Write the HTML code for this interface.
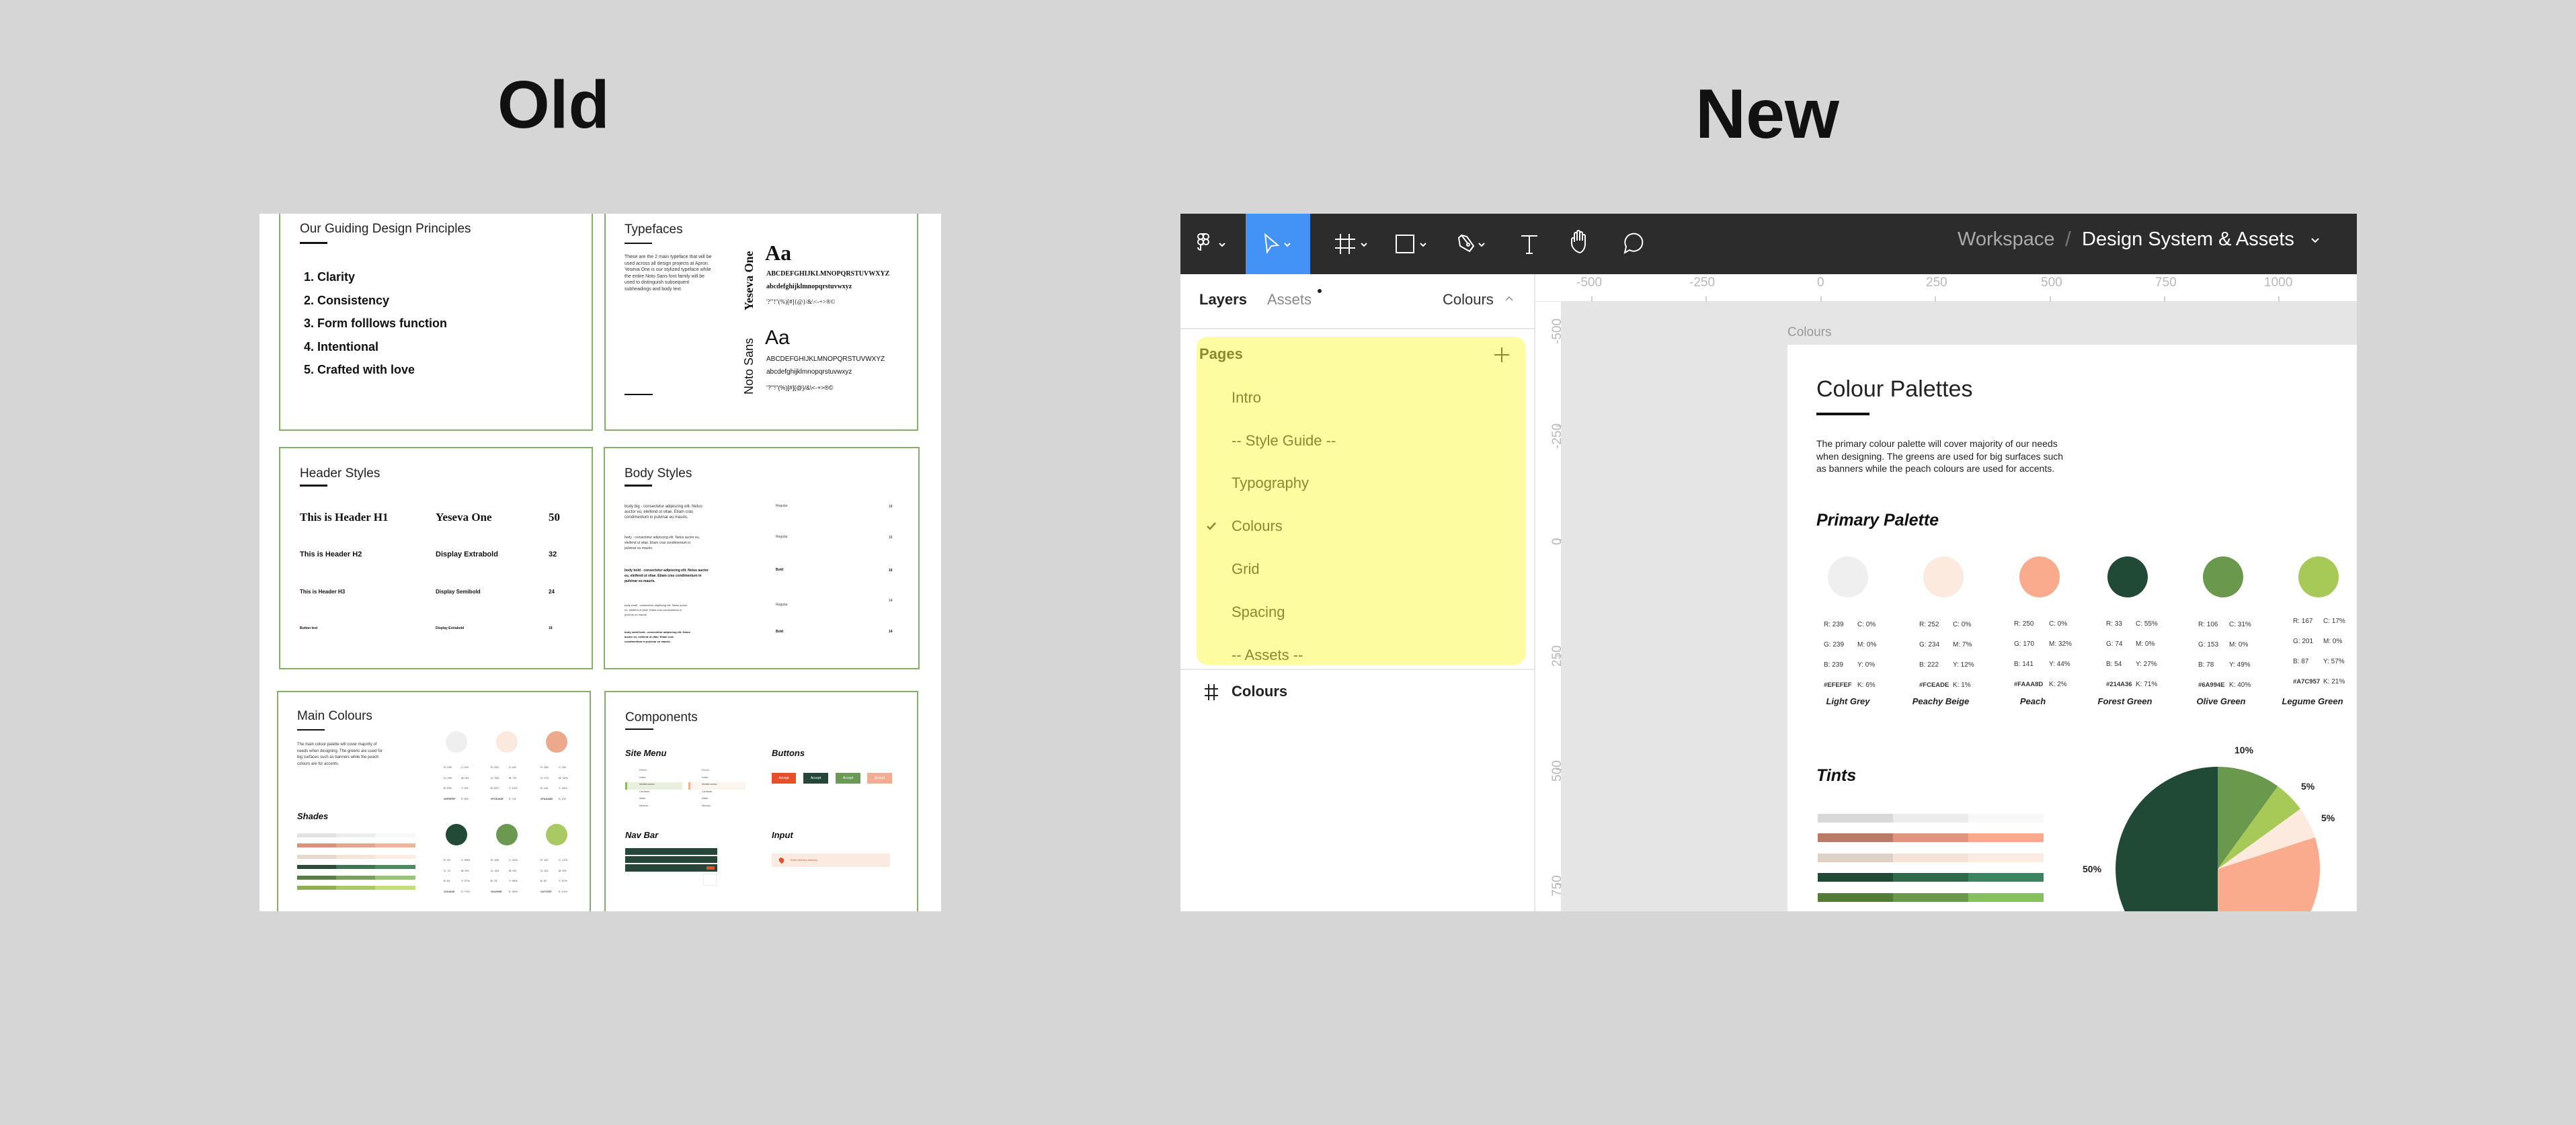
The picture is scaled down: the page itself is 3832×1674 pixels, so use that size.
<!DOCTYPE html>
<html><head><meta charset="utf-8">
<style>
*{margin:0;padding:0;box-sizing:border-box}
body{width:3832px;height:1674px;background:#d6d6d6;position:relative;overflow:hidden;font-family:"Liberation Sans",sans-serif;color:#111}
.a{position:absolute;white-space:nowrap}
.card{position:absolute;border:2px solid #86ad6a;background:#fff}
.ul{position:absolute;height:3px;background:#111}
.t{font-size:19px;font-weight:300;color:#222}
.li{font-size:18px;font-weight:bold}
.s8{font-size:7px;color:#333}
.tb{position:absolute;top:318px;height:90px}
.pg{position:absolute;left:1832px;font-size:22px;color:#8a8a30}
.rn{position:absolute;font-size:19px;color:#b8b8b8}
.v{position:absolute;font-size:10px;color:#333}
.v b{font-size:9.5px}
.nm{position:absolute;font-size:13px;font-style:italic;font-weight:bold;color:#222;transform:translateX(-50%)}
</style></head><body>

<div class="a" style="left:740px;top:96px;font-size:100px;font-weight:bold;line-height:120px">Old</div>
<div class="a" style="left:2522px;top:110px;font-size:104px;font-weight:bold;line-height:120px">New</div>

<!-- OLD PANEL -->
<div style="position:absolute;left:386px;top:318px;width:1014px;height:1038px;background:#fff;overflow:hidden">
</div>
<div style="position:absolute;left:386px;top:318px;width:1014px;height:1038px;overflow:hidden">
 <div class="card" style="left:29px;top:-10px;width:467px;height:333px"></div>
 <div class="card" style="left:513px;top:-10px;width:467px;height:333px"></div>
 <div class="card" style="left:29px;top:347px;width:467px;height:331px"></div>
 <div class="card" style="left:512px;top:347px;width:470px;height:331px"></div>
 <div class="card" style="left:26px;top:710px;width:467px;height:340px"></div>
 <div class="card" style="left:513px;top:710px;width:467px;height:340px"></div>
</div>
<!-- card1 -->
<div class="a t" style="left:446px;top:330px">Our Guiding Design Principles</div>
<div class="ul" style="left:446px;top:360px;width:41px"></div>
<div class="a li" style="left:452px;top:402px">1. Clarity</div>
<div class="a li" style="left:452px;top:437px">2. Consistency</div>
<div class="a li" style="left:452px;top:471px">3. Form folllows function</div>
<div class="a li" style="left:452px;top:506px">4. Intentional</div>
<div class="a li" style="left:452px;top:540px">5. Crafted with love</div>
<!-- card2 -->
<div class="a t" style="left:929px;top:331px">Typefaces</div>
<div class="ul" style="left:929px;top:361px;width:41px;height:2px"></div>
<div class="a s8" style="left:929px;top:378px;line-height:9.5px">These are the 2 main typeface that will be<br>used across all design projects at Apron.<br>Yeseva One is our stylized typeface while<br>the entire Noto Sans font family will be<br>used to distinguish subsequent<br>subheadings and body text.</div>
<div class="a" style="left:1104px;top:462px;transform:rotate(-90deg);transform-origin:0 0;font-family:'Liberation Serif',serif;font-weight:bold;font-size:18px;width:100px">Yeseva One</div>
<div class="a" style="left:1138px;top:358px;font-family:'Liberation Serif',serif;font-weight:bold;font-size:32px">Aa</div>
<div class="a" style="left:1140px;top:402px;font-family:'Liberation Serif',serif;font-weight:bold;font-size:10px">ABCDEFGHIJKLMNOPQRSTUVWXYZ</div>
<div class="a" style="left:1140px;top:421px;font-family:'Liberation Serif',serif;font-weight:bold;font-size:10px">abcdefghijklmnopqrstuvwxyz</div>
<div class="a" style="left:1140px;top:444px;font-family:'Liberation Serif',serif;font-size:9px">'?'"!"(%)[#]{@}/&amp;\&lt;-+&gt;®©</div>
<div class="a" style="left:1104px;top:587px;transform:rotate(-90deg);transform-origin:0 0;font-size:18px;width:84px">Noto Sans</div>
<div class="a" style="left:1138px;top:486px;font-size:30px">Aa</div>
<div class="a" style="left:1140px;top:529px;font-size:10px">ABCDEFGHIJKLMNOPQRSTUVWXYZ</div>
<div class="a" style="left:1140px;top:548px;font-size:10px">abcdefghijklmnopqrstuvwxyz</div>
<div class="a" style="left:1140px;top:572px;font-size:9px">'?'"!"(%)[#]{@}/&amp;\&lt;-+&gt;®©</div>
<div class="ul" style="left:929px;top:586px;width:42px;height:2px"></div>
<!-- card3 -->
<div class="a t" style="left:446px;top:694px">Header Styles</div>
<div class="ul" style="left:446px;top:721px;width:41px"></div>
<div class="a" style="left:446px;top:760px;font-family:'Liberation Serif',serif;font-weight:bold;font-size:17px">This is Header H1</div>
<div class="a" style="left:648px;top:760px;font-family:'Liberation Serif',serif;font-weight:bold;font-size:17px">Yeseva One</div>
<div class="a" style="left:816px;top:760px;font-family:'Liberation Serif',serif;font-weight:bold;font-size:17px">50</div>
<div class="a" style="left:446px;top:819px;font-weight:bold;font-size:11px">This is Header H2</div>
<div class="a" style="left:648px;top:819px;font-weight:bold;font-size:11px">Display Extrabold</div>
<div class="a" style="left:816px;top:819px;font-weight:bold;font-size:11px">32</div>
<div class="a" style="left:446px;top:876px;font-weight:bold;font-size:8px">This is Header H3</div>
<div class="a" style="left:648px;top:876px;font-weight:bold;font-size:8px">Display Semibold</div>
<div class="a" style="left:816px;top:876px;font-weight:bold;font-size:8px">24</div>
<div class="a" style="left:446px;top:932px;font-weight:bold;font-size:5px">Button text</div>
<div class="a" style="left:648px;top:932px;font-weight:bold;font-size:5px">Display Extrabold</div>
<div class="a" style="left:816px;top:932px;font-weight:bold;font-size:5px">18</div>
<!-- card4 -->
<div class="a t" style="left:929px;top:694px">Body Styles</div>
<div class="ul" style="left:929px;top:721px;width:41px"></div>
<div class="a" style="left:929px;top:750px;font-size:6px;line-height:8px;color:#333">body big - consectetur adipiscing elit. Netus<br>auctor eu, eleifend ut vitae. Etiam cras<br>condimentum in pulvinar eu mauris.</div>
<div class="a" style="left:929px;top:796px;font-size:5px;line-height:8px;color:#333">body - consectetur adipiscing elit. Netus auctor eu,<br>eleifend ut vitae. Etiam cras condimentum in<br>pulvinar eu mauris.</div>
<div class="a" style="left:929px;top:845px;font-size:5px;line-height:8px;font-weight:bold">body bold - consectetur adipiscing elit. Netus auctor<br>eu, eleifend ut vitae. Etiam cras condimentum in<br>pulvinar eu mauris.</div>
<div class="a" style="left:929px;top:897px;font-size:4px;line-height:7px;color:#333">body small - consectetur adipiscing elit. Netus auctor<br>eu, eleifend ut vitae. Etiam cras condimentum in<br>pulvinar eu mauris.</div>
<div class="a" style="left:929px;top:937px;font-size:4px;line-height:7px;font-weight:bold">body small bold - consectetur adipiscing elit. Netus<br>auctor eu, eleifend ut vitae. Etiam cras<br>condimentum in pulvinar eu mauris.</div>
<div class="a" style="left:1154px;top:750px;font-size:5px;color:#444">Regular</div>
<div class="a" style="left:1154px;top:796px;font-size:5px;color:#444">Regular</div>
<div class="a" style="left:1154px;top:845px;font-size:5px;font-weight:bold">Bold</div>
<div class="a" style="left:1154px;top:897px;font-size:5px;color:#444">Regular</div>
<div class="a" style="left:1154px;top:937px;font-size:5px;font-weight:bold">Bold</div>
<div class="a" style="left:1322px;top:751px;font-size:5px">18</div>
<div class="a" style="left:1322px;top:797px;font-size:5px">16</div>
<div class="a" style="left:1322px;top:846px;font-size:5px;font-weight:bold">16</div>
<div class="a" style="left:1322px;top:891px;font-size:5px">14</div>
<div class="a" style="left:1322px;top:937px;font-size:5px;font-weight:bold">14</div>
<!-- card5 -->
<div class="a t" style="left:442px;top:1055px">Main Colours</div>
<div class="ul" style="left:442px;top:1085px;width:41px;height:2px"></div>
<div class="a" style="left:442px;top:1104px;font-size:6px;line-height:9.5px;color:#333">The main colour palette will cover majority of<br>needs when designing. The greens are used for<br>big surfaces such as banners while the peach<br>colours are for accents.</div>
<div class="a" style="left:442px;top:1207px;font-size:13px;font-weight:bold;font-style:italic">Shades</div>
<div class="a" style="left:663px;top:1088px;width:32px;height:32px;border-radius:50%;background:#efefef"></div>
<div class="a" style="left:738px;top:1088px;width:32px;height:32px;border-radius:50%;background:#fbe9de"></div>
<div class="a" style="left:812px;top:1088px;width:32px;height:32px;border-radius:50%;background:#eda98b"></div>
<div class="a" style="left:663px;top:1226px;width:32px;height:32px;border-radius:50%;background:#234a37"></div>
<div class="a" style="left:738px;top:1226px;width:32px;height:32px;border-radius:50%;background:#6c9952"></div>
<div class="a" style="left:812px;top:1226px;width:32px;height:32px;border-radius:50%;background:#a9c963"></div>
<div class="a" style="left:660px;top:1134px;font-size:4px;line-height:15.6px;color:#444">R: 239<br>G: 239<br>B: 239<br><b>#EFEFEF</b></div>
<div class="a" style="left:686px;top:1134px;font-size:4px;line-height:15.6px;color:#444">C: 0%<br>M: 0%<br>Y: 0%<br>K: 6%</div>
<div class="a" style="left:730px;top:1134px;font-size:4px;line-height:15.6px;color:#444">R: 252<br>G: 234<br>B: 222<br><b>#FCEADE</b></div>
<div class="a" style="left:757px;top:1134px;font-size:4px;line-height:15.6px;color:#444">C: 0%<br>M: 7%<br>Y: 12%<br>K: 1%</div>
<div class="a" style="left:804px;top:1134px;font-size:4px;line-height:15.6px;color:#444">R: 250<br>G: 170<br>B: 141<br><b>#FAAA8D</b></div>
<div class="a" style="left:831px;top:1134px;font-size:4px;line-height:15.6px;color:#444">C: 0%<br>M: 32%<br>Y: 44%<br>K: 2%</div>
<div class="a" style="left:660px;top:1272px;font-size:4px;line-height:15.6px;color:#444">R: 33<br>G: 74<br>B: 54<br><b>#214A36</b></div>
<div class="a" style="left:686px;top:1272px;font-size:4px;line-height:15.6px;color:#444">C: 55%<br>M: 0%<br>Y: 27%<br>K: 71%</div>
<div class="a" style="left:730px;top:1272px;font-size:4px;line-height:15.6px;color:#444">R: 106<br>G: 153<br>B: 78<br><b>#6A994E</b></div>
<div class="a" style="left:757px;top:1272px;font-size:4px;line-height:15.6px;color:#444">C: 31%<br>M: 0%<br>Y: 49%<br>K: 40%</div>
<div class="a" style="left:804px;top:1272px;font-size:4px;line-height:15.6px;color:#444">R: 167<br>G: 201<br>B: 87<br><b>#A7C957</b></div>
<div class="a" style="left:831px;top:1272px;font-size:4px;line-height:15.6px;color:#444">C: 17%<br>M: 0%<br>Y: 57%<br>K: 21%</div>
<div class="a" style="left:442px;top:1240px;width:176px;height:6px;background:linear-gradient(90deg,#e2e2e2 33%,#ededed 33% 66%,#f7f7f7 66%)"></div>
<div class="a" style="left:442px;top:1255px;width:176px;height:6px;background:linear-gradient(90deg,#d9937a 33%,#e6a48c 33% 66%,#f0b49c 66%)"></div>
<div class="a" style="left:442px;top:1272px;width:176px;height:6px;background:linear-gradient(90deg,#e6d8cf 33%,#f3e3d9 33% 66%,#fbede4 66%)"></div>
<div class="a" style="left:442px;top:1287px;width:176px;height:6px;background:linear-gradient(90deg,#2b4a38 33%,#3e7453 33% 66%,#4f8a64 66%)"></div>
<div class="a" style="left:442px;top:1303px;width:176px;height:6px;background:linear-gradient(90deg,#5a7d45 33%,#76a05b 33% 66%,#98c676 66%)"></div>
<div class="a" style="left:442px;top:1318px;width:176px;height:6px;background:linear-gradient(90deg,#8fae52 33%,#aac863 33% 66%,#c5df78 66%)"></div>
<!-- card6 -->
<div class="a t" style="left:930px;top:1057px">Components</div>
<div class="ul" style="left:930px;top:1084px;width:42px;height:2px"></div>
<div class="a" style="left:930px;top:1113px;font-size:13px;font-weight:bold;font-style:italic">Site Menu</div>
<div class="a" style="left:1148px;top:1113px;font-size:13px;font-weight:bold;font-style:italic">Buttons</div>
<div class="a" style="left:930px;top:1235px;font-size:13px;font-weight:bold;font-style:italic">Nav Bar</div>
<div class="a" style="left:1148px;top:1235px;font-size:13px;font-weight:bold;font-style:italic">Input</div>
<div class="a" style="left:1148px;top:1150px;width:36px;height:16px;background:#e94e2a;color:#fff;font-size:5px;text-align:center;line-height:16px">Accept</div>
<div class="a" style="left:1195px;top:1150px;width:37px;height:16px;background:#24473a;color:#fff;font-size:5px;text-align:center;line-height:16px">Accept</div>
<div class="a" style="left:1243px;top:1150px;width:37px;height:16px;background:#6a9a54;color:#fff;font-size:5px;text-align:center;line-height:16px">Accept</div>
<div class="a" style="left:1290px;top:1150px;width:37px;height:16px;background:#f0ae94;color:#fff;font-size:5px;text-align:center;line-height:16px">Accept</div>
<div class="a" style="left:930px;top:1164px;width:85px;height:11px;background:#e9f0dd;border-left:3px solid #8dbb5a"></div>
<div class="a" style="left:1024px;top:1164px;width:85px;height:11px;background:#fbf5ef;border-left:3px solid #f0ae94"></div>
<div class="a" style="left:951px;top:1141px;font-size:3.5px;line-height:10.6px;color:#555">French<br>Indian<br>Mediterranean<br>Carribean<br>Italian<br>Mexican</div>
<div class="a" style="left:1044px;top:1141px;font-size:3.5px;line-height:10.6px;color:#555">French<br>Indian<br>Mediterranean<br>Carribean<br>Italian<br>Mexican</div>
<div class="a" style="left:930px;top:1262px;width:137px;height:10px;background:#24473a"></div>
<div class="a" style="left:930px;top:1274px;width:137px;height:10px;background:#24473a"></div>
<div class="a" style="left:930px;top:1286px;width:137px;height:11px;background:#24473a"></div>
<div class="a" style="left:1051px;top:1289px;width:12px;height:5px;background:#e94e2a"></div>
<div class="a" style="left:1046px;top:1300px;width:20px;height:18px;border:1px solid #eee"></div>
<div class="a" style="left:1148px;top:1270px;width:176px;height:20px;background:#fbeae0"></div>
<div class="a" style="left:1159px;top:1276px;width:7px;height:8px;border-radius:50% 50% 50% 0;background:#e94e2a;transform:rotate(-45deg)"></div>
<div class="a" style="left:1176px;top:1277px;font-size:4px;color:#e94e2a">Enter delivery address</div>

<!-- NEW PANEL -->
<div style="position:absolute;left:1756px;top:318px;width:1750px;height:1038px;background:#fff;overflow:hidden"></div>
<div class="tb" style="left:1756px;width:1750px;background:#2c2c2c"></div>
<div class="tb" style="left:1853px;width:96px;background:#4293f5"></div>
<svg style="position:absolute;left:1756px;top:318px" width="1750" height="90" fill="none" stroke="#fff" stroke-width="2">
 <g transform="translate(24,29)">
  <rect x="2" y="1" width="8" height="8" rx="4"/><rect x="10" y="1" width="8" height="8" rx="4"/><rect x="2" y="9" width="8" height="8" rx="4"/><circle cx="14" cy="13" r="4"/><path d="M6 17v8a4 4 0 0 1-4-4"/>
  <path d="M6 1h8M6 17h4"/>
 </g>
 <path d="M58 44l4 4 4-4"/>
 <path d="M126 31l3 26 6-9 10-1z"/><path d="M155 44l4 4 4-4"/>
 <path d="M238 30v30M251 30v30M230 38h30M230 51h30"/><path d="M269 44l4 4 4-4"/>
 <rect x="321" y="32" width="26" height="26"/><path d="M357 44l4 4 4-4"/>
 <path d="M418 32l8 2 10 14-6 8-14-8-2-12z"/><path d="M418 32l10 13"/><circle cx="428" cy="46" r="2"/><path d="M430 56l6-8"/><path d="M444 44l4 4 4-4"/>
 <path d="M507 33h24M519 33v26M514 59h10"/>
 <path d="M594 58c-7-2-12-8-12-14v-6a2 2 0 0 1 4 0v4v-12a2 2 0 0 1 4 0v10v-13a2 2 0 0 1 4 0v13v-11a2 2 0 0 1 4 0v11v-7a2 2 0 0 1 4 0v12c0 7-4 12-8 13z"/>
 <path d="M668 54a13 13 0 1 0-5-5l-2 9z"/>
</svg>
<div class="a" style="left:2912px;top:340px;font-size:29px;color:#aaa">Workspace</div>
<div class="a" style="left:3072px;top:338px;font-size:31px;color:#777">/</div>
<div class="a" style="left:3097px;top:340px;font-size:29px;color:#fff">Design System &amp; Assets</div>
<svg style="position:absolute;left:3436px;top:352px" width="16" height="12" fill="none" stroke="#fff" stroke-width="2"><path d="M3 3l5 5 5-5"/></svg>

<!-- sidebar -->
<div class="a" style="left:2282px;top:408px;width:2px;height:948px;background:#e6e6e6"></div>
<div class="a" style="left:1784px;top:433px;font-size:22px;font-weight:bold;color:#222">Layers</div>
<div class="a" style="left:1885px;top:433px;font-size:22px;color:#888">Assets</div>
<div class="a" style="left:1960px;top:430px;width:6px;height:6px;border-radius:50%;background:#222"></div>
<div class="a" style="left:2146px;top:433px;font-size:22px;color:#333">Colours</div>
<svg style="position:absolute;left:2238px;top:440px" width="14" height="10" fill="none" stroke="#888" stroke-width="1.5"><path d="M2 7l5-5 5 5"/></svg>
<div class="a" style="left:1756px;top:488px;width:527px;height:2px;background:#e6e6e6"></div>
<div class="a" style="left:1780px;top:501px;width:489px;height:488px;background:#fdfca0;border-radius:16px"></div>
<div class="a" style="left:1784px;top:514px;font-size:22px;font-weight:bold;color:#8a8a30">Pages</div>
<svg style="position:absolute;left:2222px;top:516px" width="24" height="24" stroke="#8a8a30" stroke-width="2"><path d="M12 1v22M1 12h22"/></svg>
<div class="pg" style="top:579px">Intro</div>
<div class="pg" style="top:643px">-- Style Guide --</div>
<div class="pg" style="top:706px">Typography</div>
<div class="pg" style="top:770px">Colours</div>
<svg style="position:absolute;left:1794px;top:776px" width="16" height="14" fill="none" stroke="#8a8a30" stroke-width="2.5"><path d="M2 7l4 4 8-9"/></svg>
<div class="pg" style="top:834px">Grid</div>
<div class="pg" style="top:898px">Spacing</div>
<div class="pg" style="top:962px;height:24px;overflow:hidden">-- Assets --</div>
<div class="a" style="left:1756px;top:995px;width:527px;height:2px;background:#e6e6e6"></div>
<svg style="position:absolute;left:1790px;top:1016px" width="24" height="28" stroke="#222" stroke-width="2"><path d="M8 2v24M16 2v24M2 9h20M2 19h20"/></svg>
<div class="a" style="left:1832px;top:1016px;font-size:22px;font-weight:bold;color:#222">Colours</div>

<!-- canvas -->
<div class="a" style="left:2323px;top:449px;width:1183px;height:907px;background:#e5e5e5"></div>
<div class="a" style="left:2284px;top:408px;width:1222px;height:41px;background:#fff;border-bottom:1px solid #e6e6e6"></div>
<div class="a" style="left:2284px;top:449px;width:39px;height:907px;background:#fff;border-right:1px solid #e6e6e6"></div>
<div class="rn" style="left:2345px;top:410px">-500</div>
<div class="rn" style="left:2513px;top:410px">-250</div>
<div class="rn" style="left:2703px;top:410px">0</div>
<div class="rn" style="left:2865px;top:410px">250</div>
<div class="rn" style="left:3036px;top:410px">500</div>
<div class="rn" style="left:3206px;top:410px">750</div>
<div class="rn" style="left:3368px;top:410px">1000</div>
<svg style="position:absolute;left:2284px;top:408px" width="1222" height="948" stroke="#c4c4c4" stroke-width="1.5">
 <path d="M84 33v8M254 33v8M425 33v8M595 33v8M766 33v8M936 33v8M1106 33v8"/>
 <path d="M31 226h8M31 395h8M31 568h8M31 737h8M31 908h8"/>
</svg>
<div class="rn" style="left:2306px;top:512px;transform:rotate(-90deg);transform-origin:0 0">-500</div>
<div class="rn" style="left:2306px;top:668px;transform:rotate(-90deg);transform-origin:0 0">-250</div>
<div class="rn" style="left:2306px;top:811px;transform:rotate(-90deg);transform-origin:0 0">0</div>
<div class="rn" style="left:2306px;top:992px;transform:rotate(-90deg);transform-origin:0 0">250</div>
<div class="rn" style="left:2306px;top:1163px;transform:rotate(-90deg);transform-origin:0 0">500</div>
<div class="rn" style="left:2306px;top:1334px;transform:rotate(-90deg);transform-origin:0 0">750</div>
<div class="a" style="left:2659px;top:484px;font-size:19px;color:#999">Colours</div>
<div class="a" style="left:2659px;top:513px;width:847px;height:843px;background:#fff"></div>
<div class="a" style="left:2702px;top:560px;font-size:34px;font-weight:300;color:#222">Colour Palettes</div>
<div class="a" style="left:2702px;top:614px;width:79px;height:4px;background:#111"></div>
<div class="a" style="left:2702px;top:651px;font-size:14px;line-height:18.5px;color:#222">The primary colour palette will cover majority of our needs<br>when designing. The greens are used for big surfaces such<br>as banners while the peach colours are used for accents.</div>
<div class="a" style="left:2702px;top:760px;font-size:25px;font-weight:bold;font-style:italic;color:#111">Primary Palette</div>

<div class="a" style="left:2719px;top:828px;width:60px;height:61px;border-radius:50%;background:#efefef"></div>
<div class="a" style="left:2861px;top:828px;width:60px;height:61px;border-radius:50%;background:#fceade"></div>
<div class="a" style="left:3004px;top:828px;width:60px;height:61px;border-radius:50%;background:#faaa8d"></div>
<div class="a" style="left:3135px;top:828px;width:60px;height:61px;border-radius:50%;background:#214a36"></div>
<div class="a" style="left:3277px;top:828px;width:60px;height:61px;border-radius:50%;background:#6a994e"></div>
<div class="a" style="left:3419px;top:828px;width:60px;height:61px;border-radius:50%;background:#a7c957"></div>

<div class="v" style="left:2713px;top:915px;line-height:30px">R: 239<br>G: 239<br>B: 239<br><b>#EFEFEF</b></div>
<div class="v" style="left:2763px;top:915px;line-height:30px">C: 0%<br>M: 0%<br>Y: 0%<br>K: 6%</div>
<div class="v" style="left:2855px;top:915px;line-height:30px">R: 252<br>G: 234<br>B: 222<br><b>#FCEADE</b></div>
<div class="v" style="left:2905px;top:915px;line-height:30px">C: 0%<br>M: 7%<br>Y: 12%<br>K: 1%</div>
<div class="v" style="left:2996px;top:914px;line-height:30px">R: 250<br>G: 170<br>B: 141<br><b>#FAAA8D</b></div>
<div class="v" style="left:3048px;top:914px;line-height:30px">C: 0%<br>M: 32%<br>Y: 44%<br>K: 2%</div>
<div class="v" style="left:3133px;top:914px;line-height:30px">R: 33<br>G: 74<br>B: 54<br><b>#214A36</b></div>
<div class="v" style="left:3177px;top:914px;line-height:30px">C: 55%<br>M: 0%<br>Y: 27%<br>K: 71%</div>
<div class="v" style="left:3270px;top:915px;line-height:30px">R: 106<br>G: 153<br>B: 78<br><b>#6A994E</b></div>
<div class="v" style="left:3316px;top:915px;line-height:30px">C: 31%<br>M: 0%<br>Y: 49%<br>K: 40%</div>
<div class="v" style="left:3411px;top:910px;line-height:30px">R: 167<br>G: 201<br>B: 87<br><b>#A7C957</b></div>
<div class="v" style="left:3456px;top:910px;line-height:30px">C: 17%<br>M: 0%<br>Y: 57%<br>K: 21%</div>
<div class="nm" style="left:2749px;top:1036px">Light Grey</div>
<div class="nm" style="left:2887px;top:1036px">Peachy Beige</div>
<div class="nm" style="left:3024px;top:1036px">Peach</div>
<div class="nm" style="left:3161px;top:1036px">Forest Green</div>
<div class="nm" style="left:3304px;top:1036px">Olive Green</div>
<div class="nm" style="left:3440px;top:1036px">Legume Green</div>

<div class="a" style="left:2702px;top:1140px;font-size:25px;font-weight:bold;font-style:italic;color:#111">Tints</div>
<div class="a" style="left:2704px;top:1211px;width:336px;height:13px;background:linear-gradient(90deg,#d9d9d9 33.3%,#ececec 33.3% 66.6%,#f8f8f8 66.6%)"></div>
<div class="a" style="left:2704px;top:1240px;width:336px;height:13px;background:linear-gradient(90deg,#b97b66 33.3%,#e0967e 33.3% 66.6%,#faa98c 66.6%)"></div>
<div class="a" style="left:2704px;top:1270px;width:336px;height:13px;background:linear-gradient(90deg,#e0d1c7 33.3%,#f6e2d6 33.3% 66.6%,#fcebe0 66.6%)"></div>
<div class="a" style="left:2704px;top:1299px;width:336px;height:13px;background:linear-gradient(90deg,#214a36 33.3%,#2d6a4b 33.3% 66.6%,#3a845f 66.6%)"></div>
<div class="a" style="left:2704px;top:1329px;width:336px;height:13px;background:linear-gradient(90deg,#557b3b 33.3%,#6a994e 33.3% 66.6%,#86c060 66.6%)"></div>

<svg style="position:absolute;left:3100px;top:1100px" width="406" height="256">
 <path d="M199 193L199 41A152 152 0 0 1 288.4 70Z" fill="#6a994e"/>
 <path d="M199 193L288.4 70A152 152 0 0 1 322 103.6Z" fill="#a7c957"/>
 <path d="M199 193L322 103.6A152 152 0 0 1 343.6 146Z" fill="#fceade"/>
 <path d="M199 193L343.6 146A152 152 0 0 1 199 345Z" fill="#faaa8d"/>
 <path d="M199 193L199 345A152 152 0 0 1 199 41Z" fill="#214a36"/>
</svg>
<div class="a" style="left:3324px;top:1108px;font-size:14px;font-weight:bold;color:#222">10%</div>
<div class="a" style="left:3423px;top:1162px;font-size:14px;font-weight:bold;color:#222">5%</div>
<div class="a" style="left:3453px;top:1209px;font-size:14px;font-weight:bold;color:#222">5%</div>
<div class="a" style="left:3098px;top:1285px;font-size:14px;font-weight:bold;color:#222">50%</div>
</body></html>
